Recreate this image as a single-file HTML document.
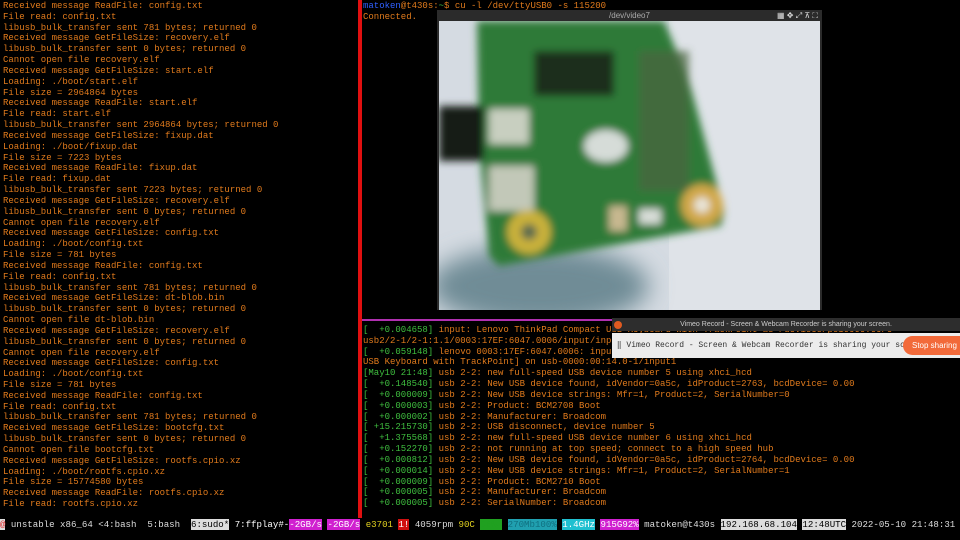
<!DOCTYPE html>
<html><head><meta charset="utf-8"><style>
*{margin:0;padding:0}
body{width:960px;height:540px;background:#000;overflow:hidden;position:relative;font-family:"Liberation Mono",monospace;font-size:9px;line-height:10.83px;color:#e07a1c}
.pane{position:absolute;white-space:pre}
.g{color:#3fbf3f}.b{color:#3060ff}.o{color:#e07a1c}
#vid{position:absolute;left:437px;top:10px;width:385px;height:300px;background:#2b2b2b}
#vt{height:11px;font-family:"Liberation Sans",sans-serif;font-size:8px;line-height:11px;color:#aaa;text-align:center}
#img{position:absolute;left:2px;top:11px;width:381px;height:289px;overflow:hidden;background:#d6dce3}
#st{position:absolute;left:0;top:518px;width:960px;height:14px;white-space:pre;color:#ddd;font-size:9.1px;line-height:14px}
</style></head><body>
<div class="pane" style="left:3px;top:1px">Received message ReadFile: config.txt
File read: config.txt
libusb_bulk_transfer sent 781 bytes; returned 0
Received message GetFileSize: recovery.elf
libusb_bulk_transfer sent 0 bytes; returned 0
Cannot open file recovery.elf
Received message GetFileSize: start.elf
Loading: ./boot/start.elf
File size = 2964864 bytes
Received message ReadFile: start.elf
File read: start.elf
libusb_bulk_transfer sent 2964864 bytes; returned 0
Received message GetFileSize: fixup.dat
Loading: ./boot/fixup.dat
File size = 7223 bytes
Received message ReadFile: fixup.dat
File read: fixup.dat
libusb_bulk_transfer sent 7223 bytes; returned 0
Received message GetFileSize: recovery.elf
libusb_bulk_transfer sent 0 bytes; returned 0
Cannot open file recovery.elf
Received message GetFileSize: config.txt
Loading: ./boot/config.txt
File size = 781 bytes
Received message ReadFile: config.txt
File read: config.txt
libusb_bulk_transfer sent 781 bytes; returned 0
Received message GetFileSize: dt-blob.bin
libusb_bulk_transfer sent 0 bytes; returned 0
Cannot open file dt-blob.bin
Received message GetFileSize: recovery.elf
libusb_bulk_transfer sent 0 bytes; returned 0
Cannot open file recovery.elf
Received message GetFileSize: config.txt
Loading: ./boot/config.txt
File size = 781 bytes
Received message ReadFile: config.txt
File read: config.txt
libusb_bulk_transfer sent 781 bytes; returned 0
Received message GetFileSize: bootcfg.txt
libusb_bulk_transfer sent 0 bytes; returned 0
Cannot open file bootcfg.txt
Received message GetFileSize: rootfs.cpio.xz
Loading: ./boot/rootfs.cpio.xz
File size = 15774580 bytes
Received message ReadFile: rootfs.cpio.xz
File read: rootfs.cpio.xz</div>
<div style="position:absolute;left:358px;top:0;width:4px;height:518px;background:#e01010"></div>
<div class="pane" style="left:363px;top:1px"><span class="b">matoken</span>@t430s:<span class="g">~</span>$ cu -l /dev/ttyUSB0 -s 115200
Connected.</div>
<div style="position:absolute;left:362px;top:319px;width:252px;height:2px;background:#b030b0"></div>
<div class="pane" style="left:363px;top:325px"><span class="g">[  +0.004658]</span> input: Lenovo ThinkPad Compact USB Keyboard with TrackPoint as /devices/pci0000:00/0
usb2/2-1/2-1:1.1/0003:17EF:6047.0006/input/input
<span class="g">[  +0.059148]</span> lenovo 0003:17EF:6047.0006: input
USB Keyboard with TrackPoint] on usb-0000:00:14.0-1/input1
<span class="g">[May10 21:48]</span> usb 2-2: new full-speed USB device number 5 using xhci_hcd
<span class="g">[  +0.148540]</span> usb 2-2: New USB device found, idVendor=0a5c, idProduct=2763, bcdDevice= 0.00
<span class="g">[  +0.000009]</span> usb 2-2: New USB device strings: Mfr=1, Product=2, SerialNumber=0
<span class="g">[  +0.000003]</span> usb 2-2: Product: BCM2708 Boot
<span class="g">[  +0.000002]</span> usb 2-2: Manufacturer: Broadcom
<span class="g">[ +15.215730]</span> usb 2-2: USB disconnect, device number 5
<span class="g">[  +1.375568]</span> usb 2-2: new full-speed USB device number 6 using xhci_hcd
<span class="g">[  +0.152270]</span> usb 2-2: not running at top speed; connect to a high speed hub
<span class="g">[  +0.000812]</span> usb 2-2: New USB device found, idVendor=0a5c, idProduct=2764, bcdDevice= 0.00
<span class="g">[  +0.000014]</span> usb 2-2: New USB device strings: Mfr=1, Product=2, SerialNumber=1
<span class="g">[  +0.000009]</span> usb 2-2: Product: BCM2710 Boot
<span class="g">[  +0.000005]</span> usb 2-2: Manufacturer: Broadcom
<span class="g">[  +0.000005]</span> usb 2-2: SerialNumber: Broadcom</div>
<div id="vid"><div id="vt">/dev/video7<span style="position:absolute;right:4px;color:#ddd">▦ ✥ ⤢ ⊼ ⛶</span></div>
<div id="img">
<svg width="381" height="289" viewBox="0 0 381 289">
<defs><filter id="f" x="-20%" y="-20%" width="140%" height="140%"><feGaussianBlur stdDeviation="4"/></filter>
<filter id="f2" x="-20%" y="-20%" width="140%" height="140%"><feGaussianBlur stdDeviation="12"/></filter></defs>
<rect width="381" height="289" fill="#d5dbe2"/>
<rect x="230" y="0" width="151" height="289" fill="#dfe3e8"/>
<ellipse cx="100" cy="265" rx="110" ry="40" fill="#6f8c96" filter="url(#f2)"/>
<g filter="url(#f)">
<polygon points="38,0 225,0 250,60 285,190 282,205 60,245 50,235 40,120" fill="#2f7a38"/>
<polygon points="0,85 45,85 45,140 0,140" fill="#141a14"/>
<rect x="95" y="30" width="80" height="45" fill="#1a2d1a"/>
<rect x="200" y="30" width="50" height="140" fill="#4a6440" opacity="0.7"/>
<rect x="50" y="88" width="40" height="35" fill="#c8cfc0"/>
<rect x="50" y="145" width="45" height="45" fill="#c2c8b8"/>
<ellipse cx="167" cy="125" rx="22" ry="16" fill="#d6dcd8"/>
<rect x="170" y="185" width="18" height="25" fill="#c7b890"/>
<rect x="200" y="188" width="22" height="15" fill="#d8ddd8"/>
<circle cx="90" cy="211" r="22" fill="#c9b13a"/>
<circle cx="90" cy="211" r="8" fill="#5a6a50"/>
<circle cx="263" cy="184" r="21" fill="#d1a84a"/>
<circle cx="263" cy="184" r="8" fill="#e8e4d8"/>
</g>
</svg>
</div></div>
<div style="position:absolute;left:612px;top:318px;width:348px;height:13px;background:#2d2d2d;font-family:'Liberation Sans',sans-serif;font-size:7px;line-height:13px;color:#ccc;text-align:center">Vimeo Record - Screen &amp; Webcam Recorder is sharing your screen.<span style="position:absolute;left:2px;top:3px;width:8px;height:8px;border-radius:50%;background:#e05a20"></span></div>
<div style="position:absolute;left:612px;top:333px;width:348px;height:25px;background:#ececec;font-size:8px;line-height:25px;color:#333;white-space:pre;overflow:hidden"> ‖ Vimeo Record - Screen &amp; Webcam Recorder is sharing your screen.<span style="position:absolute;left:291px;top:3px;width:70px;height:19px;line-height:19px;border-radius:10px;background:#f26a3a;color:#fff;font-family:'Liberation Sans',sans-serif;padding-left:9px">Stop sharing</span></div>
<div id="st"><span style="background:#ddd;color:#e03030">@</span> unstable x86_64 &lt;4:bash  5:bash  <span style="background:#ddd;color:#000">6:sudo*</span> <span style="color:#fff">7:ffplay#-</span><span style="background:#d020d0;color:#fff">-2GB/s</span> <span style="background:#d020d0;color:#fff">-2GB/s</span> <span style="color:#e0d020">e3701</span> <span style="background:#d01010;color:#fff">1!</span> 4059rpm <span style="color:#e0d020">90C</span> <span style="background:#20a020;color:#20a020">96%=</span> <span style="background:#20a0b0;color:#107080">270Mb100%</span> <span style="background:#20c0d0;color:#fff">1.4GHz</span> <span style="background:#d020d0;color:#fff">915G92%</span> matoken@t430s <span style="background:#ddd;color:#000">192.168.68.104</span> <span style="background:#ddd;color:#000">12:48UTC</span> 2022-05-10 21:48:31</div>
</body></html>
